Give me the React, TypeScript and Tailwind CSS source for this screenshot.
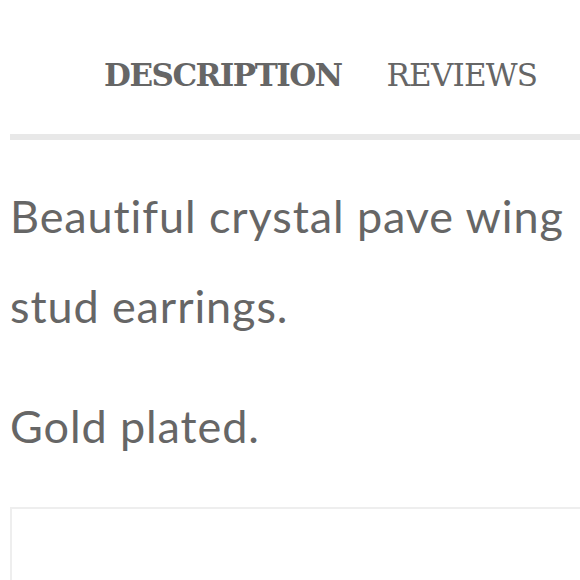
const App = () => {
  return (
    <div className="w-[580px] h-[580px] overflow-hidden bg-white pl-[10px]">
      <div className="w-[600px]">
        <div className="flex gap-[45px] pl-[94px] pt-[53px] pb-[37px] text-[#666]" style={{ fontFamily: '"DejaVu Serif", serif' }}>
          <span className="text-[31px] leading-[44px] font-bold tracking-[-1.5px]">DESCRIPTION</span>
          <span className="text-[31px] leading-[44px] tracking-[-0.8px]">REVIEWS</span>
        </div>
        <div className="h-[6px] bg-[#e8e8e8]"></div>
        <div className="pt-[31px] pr-[20px] text-[#666] text-[45px] leading-[90px] tracking-[0.9px] [font-variant-ligatures:none]" style={{ fontFamily: 'Lato, sans-serif' }}>
          <p>Beautiful crystal pave wing stud earrings.</p>
          <p className="mt-[30px]">Gold plated.</p>
        </div>
        <div className="mt-[36px] h-[120px] border-2 border-[#eee]"></div>
      </div>
    </div>
  );
};

export default App;
